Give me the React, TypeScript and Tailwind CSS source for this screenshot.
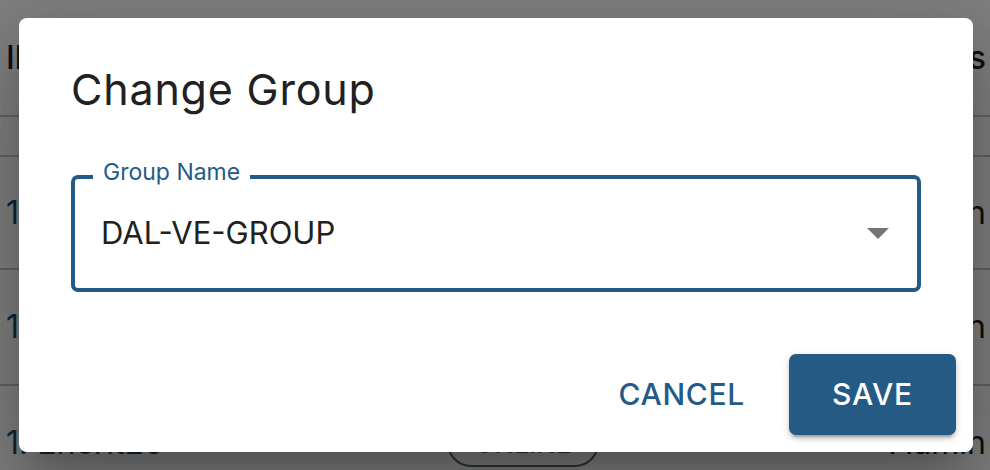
export default function App() {
  return (
    <div className="relative h-[470px] w-[990px] overflow-hidden bg-white font-['Inter',sans-serif]">
      {/* page behind the dialog */}
      <div className="flex flex-col text-[32px] text-[#222]">
        <div className="flex h-[117px] items-center justify-between border-b-2 border-[#c4c4c4] pl-[6px] pr-[4px]">
          <span className="font-medium">Il</span>
          <span className="font-medium">Actions</span>
        </div>
        <div className="h-[40px] border-b-2 border-[#c4c4c4]" />
        <div className="flex h-[113px] items-center justify-between border-b-2 border-[#c4c4c4] pl-[6px] pr-[4px]">
          <span className="text-[#1f4b72]">1.4.2.11</span>
          <span>Edit Domain</span>
        </div>
        <div className="flex h-[116px] items-center justify-between border-b-2 border-[#c4c4c4] pl-[6px] pr-[4px]">
          <span className="text-[#1f4b72]">1.4.2.12</span>
          <span>Edit Domain</span>
        </div>
        <div className="flex h-[114px] items-center pl-[6px] pr-[4px]">
          <span className="w-[441px] text-[#1f4b72]">1. Encrit25</span>
          <span className="flex h-[48px] w-[152px] items-center justify-center rounded-full border-2 border-[#4d774d] text-[26px] font-medium text-[#3d6b3d]">
            ONLINE
          </span>
          <span className="ml-auto">Admin</span>
        </div>
      </div>

      {/* backdrop + dialog */}
      <div className="absolute inset-0 bg-[#000]/50 pl-[19px] pt-[18px]">
        <div className="flex h-[434px] w-[954px] flex-col rounded-[8px] bg-white shadow-[0_22px_30px_-14px_rgba(0,0,0,0.2),0_48px_76px_6px_rgba(0,0,0,0.14),0_18px_92px_16px_rgba(0,0,0,0.12)]">
          <h2 className="pl-[52px] pt-[39px] text-[43px] leading-[64px] tracking-[0.8px] text-[#212121]">Change Group</h2>

          <div className="relative mx-[52px] mt-[54px] flex h-[117px] items-center rounded-[7px] border-4 border-[#245b86] pl-[26px] pr-[28px]">
            <span className="absolute left-[18px] top-[-19px] bg-white px-[10px] text-[23px] leading-[24px] text-[#245b86]">
              Group Name
            </span>
            <span className="flex-1 text-[31px] text-[#212121]">DAL-VE-GROUP</span>
            <svg width="22" height="11" viewBox="0 0 22 11">
              <polygon points="0,0 22,0 11,11" fill="#757575" />
            </svg>
          </div>

          <div className="mt-auto flex items-center justify-end gap-[22px] pb-[17px] pr-[17px]">
            <button className="h-[81px] px-[22px] text-[30px] font-medium tracking-[0.7px] text-[#245b86]">CANCEL</button>
            <button className="h-[81px] w-[167px] rounded-[7px] bg-[#245a84] text-[30px] font-medium tracking-[0.86px] text-white shadow-[0_6px_2px_-4px_rgba(0,0,0,0.2),0_4px_4px_0_rgba(0,0,0,0.14),0_2px_10px_0_rgba(0,0,0,0.12)]">
              SAVE
            </button>
          </div>
        </div>
      </div>
    </div>
  )
}
